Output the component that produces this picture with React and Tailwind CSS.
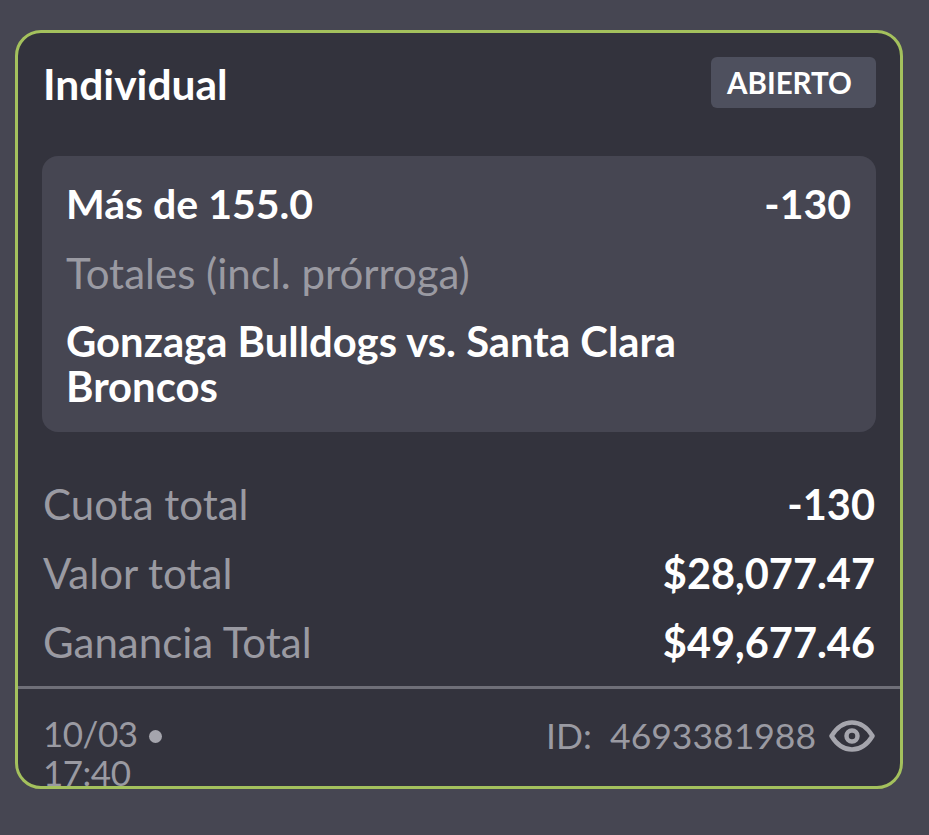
import React from 'react'

const Row = ({ label, value }) => (
  <div className="flex items-center justify-between h-[69px]">
    <span className="text-[42px] text-[#9a9aa2]">{label}</span>
    <span className="text-[41.5px] font-bold text-white">{value}</span>
  </div>
)

const EyeIcon = () => (
  <svg width="46" height="32" viewBox="0 0 46 32" fill="none" stroke="#a5a5ad" strokeWidth="4.500">
    <path d="M2.5 16C8 7 15 2.500 23 2.500S38 7 43.500 16C38 25 31 29.500 23 29.500S8 25 2.500 16Z" strokeLinejoin="round" />
    <circle cx="23" cy="16" r="5.500" strokeWidth="4.500" />
  </svg>
)

export default function App() {
  return (
    <div className="w-[929px] h-[835px] overflow-hidden bg-[#464652] pt-[30px] pl-[15px] font-['Lato','Noto_Sans',sans-serif]">
      <div className="w-[888px] h-[759px] border-[3px] border-[#a4c15d] rounded-[26px] bg-[#33333d] overflow-hidden">
        <div className="px-[24px]">
          <div className="flex items-center justify-between h-[103px] pt-[1px]">
            <h1 className="ml-px mt-px mb-[3px] text-[42.500px] font-bold text-white">Individual</h1>
            <div className="w-[165px] h-[51px] mb-[6px] flex items-center pl-4 pt-[2px] rounded-md bg-[#4e505e] text-[29.500px] font-bold text-white">
              ABIERTO
            </div>
          </div>

          <div className="mt-5 h-[276px] rounded-2xl bg-[#464652] pl-[24px] pr-[25px] pt-[23px]">
            <div className="flex items-center justify-between text-[41px] font-bold text-white leading-[50px]">
              <span>Más de 155.0</span>
              <span>-130</span>
            </div>
            <div className="mt-[19px] text-[42px] text-[#9a9aa2] leading-[50px]">Totales (incl. prórroga)</div>
            <div className="mt-[21px] max-w-[640px] text-[41.800px] font-bold text-white leading-[45px]">
              Gonzaga Bulldogs vs. Santa Clara Broncos
            </div>
          </div>

          <div className="mt-[38px] px-px">
            <Row label="Cuota total" value="-130" />
            <Row label="Valor total" value="$28,077.47" />
            <Row label="Ganancia Total" value="$49,677.46" />
          </div>
        </div>

        <div className="mt-[9px] h-[3px] bg-[#6f6f78]" />

        <div className="flex justify-between px-[25px] pt-[25px] text-[#9a9aa2]">
          <div className="w-[130px] text-[35px] leading-[39px] tracking-[-0.5px]">
            10/03 <span className="inline-block w-[13px] h-[13px] ml-[3px] rounded-full bg-[#a5a5ad] align-[4px]" /> 17:40
          </div>
          <div className="flex items-center h-[44px] gap-[13px] text-[35.500px]">
            <span>ID:&nbsp; 4693381988</span>
            <EyeIcon />
          </div>
        </div>
      </div>
    </div>
  )
}
